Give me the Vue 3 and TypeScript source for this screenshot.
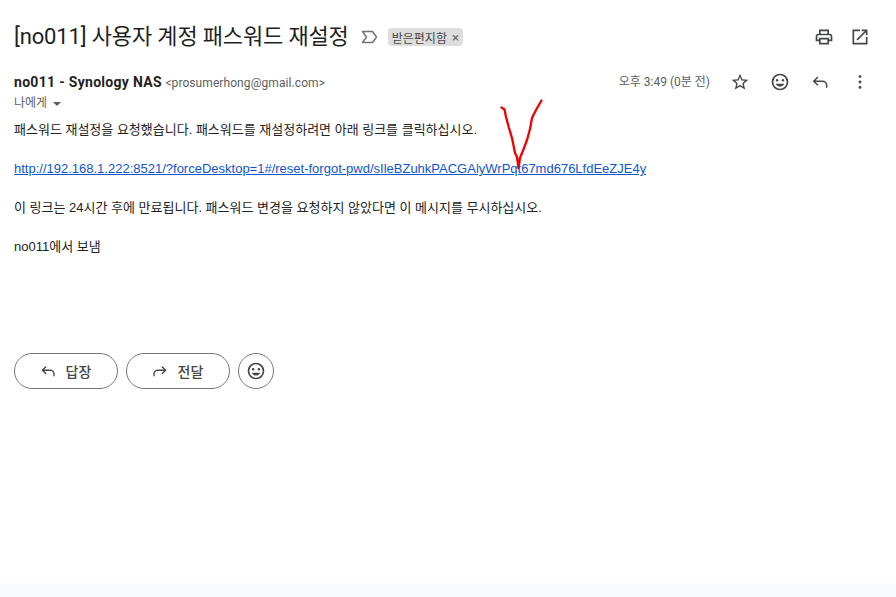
<template>
  <div class="page">
    <main class="mail">
      <header class="subject-row">
        <h1 class="subject">[no011] 사용자 계정 패스워드 재설정</h1>
        <svg class="marker" viewBox="0 0 20 20" width="20" height="20">
          <path d="M3.500 4.500h10l4 5.500-4 5.500h-10l4-5.500z" fill="none" stroke="#6f7275" stroke-width="1.500" stroke-linejoin="round" />
        </svg>
        <span class="label">받은편지함 <span class="label-x">×</span></span>
        <div class="top-icons">
          <svg viewBox="0 0 24 24" width="20" height="20" fill="#444746">
            <path d="M19 8h-1V3H6v5H5c-1.660 0-3 1.340-3 3v6h4v4h12v-4h4v-6c0-1.660-1.340-3-3-3zM8 5h8v3H8V5zm8 14H8v-4h8v4zm4-4h-2v-2H6v2H4v-4c0-.550.450-1 1-1h14c.550 0 1 .450 1 1v4z" />
          </svg>
          <svg viewBox="0 0 24 24" width="20" height="20" fill="#444746">
            <path d="M19 19H5V5h7V3H3v18h18v-9h-2v7zM14 3v2h3.590l-9.830 9.830 1.410 1.410L19 6.410V10h2V3h-7z" />
          </svg>
        </div>
      </header>

      <section class="sender-row">
        <div class="sender">
          <div class="from"><strong>no011 - Synology NAS</strong> <span class="addr">&lt;prosumerhong@gmail.com&gt;</span></div>
          <div class="to">나에게 <span class="caret"></span></div>
        </div>
        <span class="time">오후 3:49 (0분 전)</span>
        <div class="row-icons">
          <svg viewBox="0 0 24 24" width="20" height="20" fill="#444746">
            <path d="M22 9.240l-7.190-.620L12 2 9.190 8.630 2 9.240l5.460 4.730L5.820 21 12 17.270 18.180 21l-1.630-7.030L22 9.240zM12 15.400l-3.760 2.270 1-4.280-3.320-2.880 4.380-.380L12 6.100l1.710 4.040 4.380.380-3.320 2.880 1 4.280L12 15.400z" />
          </svg>
          <svg viewBox="0 0 24 24" width="20" height="20" fill="#444746">
            <path d="M12 2a10 10 0 100 20 10 10 0 000-20zm0 18a8 8 0 110-16 8 8 0 010 16z" />
            <circle cx="8.500" cy="10" r="1.500" /><circle cx="15.500" cy="10" r="1.500" />
            <path d="M12 17.500c2.300 0 4.300-1.400 5.100-3.500H6.900c.8 2.100 2.800 3.500 5.100 3.500z" />
          </svg>
          <svg viewBox="0 0 24 24" width="20" height="20" fill="none" stroke="#444746" stroke-width="1.800">
            <path d="M9.500 6l-5 5 5 5M4.500 11H15a5 5 0 015 5v3" />
          </svg>
          <svg viewBox="0 0 24 24" width="20" height="20" fill="#444746">
            <circle cx="12" cy="5.500" r="1.700" /><circle cx="12" cy="12" r="1.700" /><circle cx="12" cy="18.500" r="1.700" />
          </svg>
        </div>
      </section>

      <article class="body">
        <p>패스워드 재설정을 요청했습니다. 패스워드를 재설정하려면 아래 링크를 클릭하십시오.</p>
        <p><a href="#">{{ resetUrl }}</a></p>
        <p>이 링크는 24시간 후에 만료됩니다. 패스워드 변경을 요청하지 않았다면 이 메시지를 무시하십시오.</p>
        <p>no011에서 보냄</p>
      </article>

      <div class="actions">
        <button class="pill">
          <svg viewBox="0 0 24 24" width="18" height="18" fill="none" stroke="#444746" stroke-width="1.800">
            <path d="M9.500 6l-5 5 5 5M4.500 11H15a5 5 0 015 5v3" />
          </svg>
          답장
        </button>
        <button class="pill">
          <svg viewBox="0 0 24 24" width="18" height="18" fill="none" stroke="#444746" stroke-width="1.800">
            <path d="M14.500 6l5 5-5 5M19.500 11H9a5 5 0 00-5 5v3" />
          </svg>
          전달
        </button>
        <button class="round">
          <svg viewBox="0 0 24 24" width="20" height="20" fill="#444746">
            <path d="M12 2a10 10 0 100 20 10 10 0 000-20zm0 18a8 8 0 110-16 8 8 0 010 16z" />
            <circle cx="8.500" cy="10" r="1.500" /><circle cx="15.500" cy="10" r="1.500" />
            <path d="M12 17.500c2.300 0 4.300-1.400 5.100-3.500H6.900c.8 2.100 2.800 3.500 5.100 3.500z" />
          </svg>
        </button>
      </div>
    </main>
    <footer class="strip"></footer>

    <!-- hand drawn red check over the link -->
    <svg class="scribble" viewBox="0 0 896 597" width="896" height="597">
      <path
        d="M501.500 107.500 L504.500 109.500 L506 117 L509 128 L512 138 L515 153 L517 157 L518.500 168 L520 158 L524 148 L527 140 L530 129 L532 118 L536 110 L541.500 100.500"
        fill="none"
        stroke="#f00000"
        stroke-width="2.300"
        stroke-linejoin="round"
        stroke-linecap="round"
      />
    </svg>
  </div>
</template>

<script setup lang="ts">
const resetUrl = 'http://192.168.1.222:8521/?forceDesktop=1#/reset-forgot-pwd/sIleBZuhkPACGAlyWrPqt67md676LfdEeZJE4y'
</script>

<style>
html, body {
  margin: 0;
  background: #fff;
}
</style>

<style scoped>
.page {
  position: relative;
  display: flex;
  flex-direction: column;
  width: 896px;
  height: 597px;
  overflow: hidden;
  background: #fff;
  color: #1f1f1f;
  font-family: Roboto, "Noto Sans CJK KR", sans-serif;
}

.mail {
  flex: 1;
  padding: 0 16px 0 14px;
}

.strip {
  height: 14px;
  background: #f8faff;
}

.subject-row {
  display: flex;
  align-items: center;
  height: 36px;
  margin-top: 19px;
}

.subject {
  margin: 0;
  font-size: 22px;
  font-weight: 400;
  line-height: 36px;
  letter-spacing: -0.15px;
}

.marker {
  margin-left: 10px;
}

.label {
  display: inline-flex;
  align-items: center;
  gap: 5px;
  height: 18px;
  margin-left: 9px;
  padding: 0 4px;
  border-radius: 4px;
  background: #dddddd;
  color: #444746;
  font-size: 12px;
}

.label-x {
  color: #666;
  font-size: 13px;
}

.top-icons {
  display: flex;
  gap: 16px;
  margin-left: auto;
  padding-right: 10px;
}

.sender-row {
  display: flex;
  align-items: flex-start;
  margin-top: 17px;
}

.sender {
  flex: 1;
}

.from {
  font-size: 14px;
  line-height: 20px;
}

.from strong {
  font-weight: 700;
  letter-spacing: 0.3px;
}

.addr {
  color: #5e5e5e;
  font-size: 12px;
  letter-spacing: 0.08px;
}

.to {
  display: flex;
  align-items: center;
  gap: 6px;
  color: #5e5e5e;
  font-size: 12px;
  line-height: 20px;
}

.caret {
  width: 0;
  height: 0;
  margin-top: 2px;
  border-left: 4px solid transparent;
  border-right: 4px solid transparent;
  border-top: 4px solid #5e5e5e;
}

.time {
  color: #5e5e5e;
  font-size: 12px;
  line-height: 20px;
}

.row-icons {
  display: flex;
  gap: 20px;
  margin-left: 20px;
  padding-right: 10px;
}

.body {
  margin-top: 7px;
  font-family: "Liberation Sans", "Noto Sans CJK KR", sans-serif;
  font-size: 13px;
  line-height: 19.500px;
  color: #222;
}

.body p {
  margin: 0 0 19.500px;
}

.body a {
  color: #1155cc;
}

.actions {
  display: flex;
  gap: 8px;
  margin-top: 96px;
}

.pill {
  display: flex;
  align-items: center;
  justify-content: center;
  gap: 9px;
  width: 104px;
  height: 36px;
  padding: 0 2px 0 0;
  border: 1px solid #747775;
  border-radius: 18px;
  background: #fff;
  color: #444746;
  font-family: Roboto, "Noto Sans CJK KR", sans-serif;
  font-size: 14px;
  font-weight: 500;
}

.round {
  display: flex;
  align-items: center;
  justify-content: center;
  width: 36px;
  height: 36px;
  padding: 0;
  border: 1px solid #747775;
  border-radius: 50%;
  background: #fff;
}

.scribble {
  position: absolute;
  top: 0;
  left: 0;
  pointer-events: none;
}
</style>
